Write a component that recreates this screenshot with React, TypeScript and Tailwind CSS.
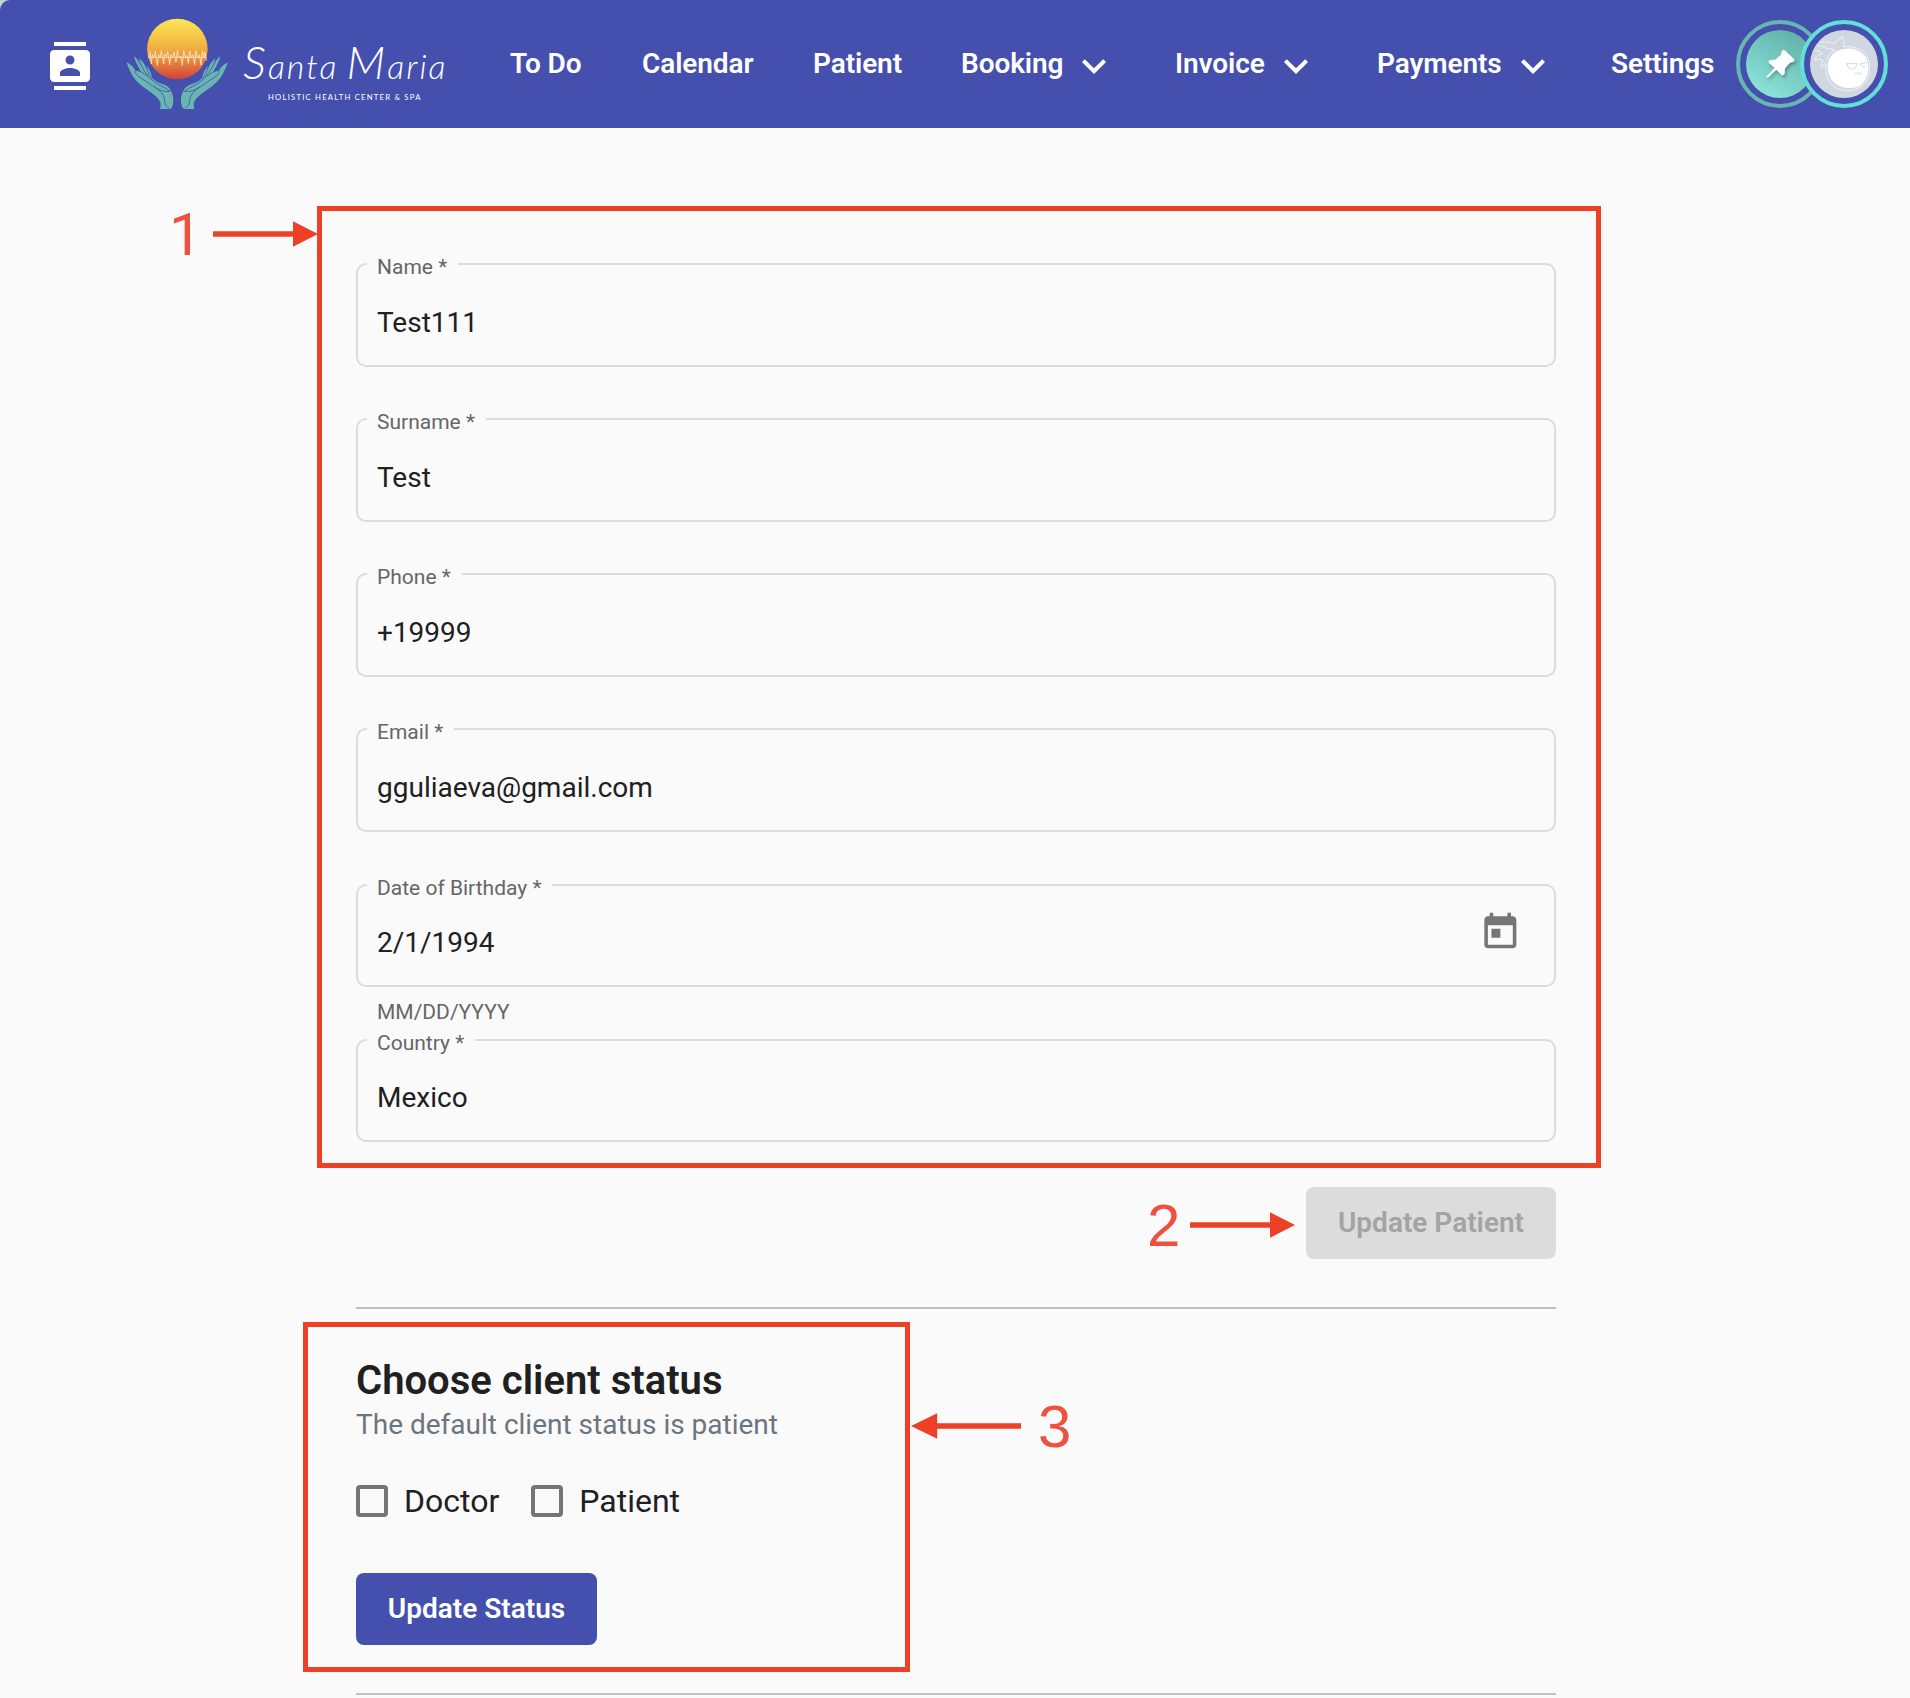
import React from "react";

type NavEntry = { label: string; width: string; menu?: boolean };

const NAV: NavEntry[] = [
  { label: "To Do", width: "w-[132px]" },
  { label: "Calendar", width: "w-[171px]" },
  { label: "Patient", width: "w-[148px]" },
  { label: "Booking", width: "w-[214px]", menu: true },
  { label: "Invoice", width: "w-[202px]", menu: true },
  { label: "Payments", width: "w-[234px]", menu: true },
  { label: "Settings", width: "w-[124px]" },
];

function ContactsIcon() {
  return (
    <svg viewBox="0 0 24 24" className="mt-1 size-12 shrink-0 fill-white">
      <path d="M20 0H4v2h16V0zM4 24h16v-2H4v2zM20 4H4c-1.1 0-2 .9-2 2v12c0 1.1.9 2 2 2h16c1.1 0 2-.9 2-2V6c0-1.1-.9-2-2-2zm-8 2.75c1.24 0 2.25 1.01 2.25 2.25s-1.01 2.25-2.25 2.25S9.75 10.24 9.75 9 10.76 6.75 12 6.75zM17 17H7v-1.5c0-1.67 3.33-2.5 5-2.5s5 .83 5 2.5V17z" />
    </svg>
  );
}

function Chevron() {
  return (
    <svg viewBox="0 0 24 24" className="ml-[7px] mt-1 size-12 shrink-0 fill-white">
      <path d="M7.41 8.59 12 13.17l4.59-4.58L18 10l-6 6-6-6 1.41-1.41z" />
    </svg>
  );
}

function HandHalf() {
  return (
    <g>
      <path
        fill="#68b5b1"
        d="M20 157 C30 162 40 170 46 181 C52 181 58 183 64 187 C56 172 44 152 42 138 C54 148 62 164 69 181 C62 166 56 152 56 145 C68 152 76 166 80 181 C78 174 78 170 79 168 C88 176 94 190 97 205 C104 213 116 219 127 222 C140 226 150 233 153 244 C160 254 162 272 158 286 C157 292 154 296 150 297 H120 C122 290 122 283 121 277 C112 258 92 247 74 234 C54 220 38 202 32 186 C26 176 22 166 20 157Z"
      />
      <path
        fill="none"
        stroke="#444fae"
        strokeWidth="2.4"
        d="M46 181 C44 190 52 196 60 202 L100 229 C118 240 134 252 134 274 C135 286 141 292 148 294 M46 181 C60 180 84 199 97 211 C112 226 134 230 150 244 C134 247 116 240 103 230 M56 147 C62 166 72 184 84 197 M79 170 C82 184 88 196 96 206"
      />
    </g>
  );
}

function LogoMark() {
  return (
    <svg viewBox="0 0 360 315" className="mb-[3px] h-[105px] w-[120px] shrink-0">
      <defs>
        <linearGradient id="sun" x1="0" y1="0" x2="0" y2="1">
          <stop offset="0" stopColor="#fbe65a" />
          <stop offset="0.3" stopColor="#f4c844" />
          <stop offset="0.62" stopColor="#ea9b41" />
          <stop offset="1" stopColor="#d4403a" />
        </linearGradient>
      </defs>
      <circle cx="172" cy="117" r="91" fill="url(#sun)" />
      <path
        fill="none"
        stroke="#fde3c4"
        strokeWidth="2.6"
        strokeLinejoin="round"
        d="M84 142 H260 M86 142 L90 123 L94 162 L97 134 L102 142 L106 124 L112 166 L116 134 L121 142 L124 122 L131 162 L135 132 L139 140 L143 124 L149 164 L153 133 L158 142 L162 126 L168 156 L172 122 L176 144 L182 138 L187 166 L191 122 L196 144 L201 136 L205 160 L209 123 L214 142 L219 134 L224 164 L228 122 L233 144 L238 134 L243 165 L247 123 L251 142 L255 126 L259 152"
      />
      <HandHalf />
      <g transform="translate(343 0) scale(-1 1)">
        <HandHalf />
      </g>
    </svg>
  );
}

function Wordmark() {
  return (
    <div className="flex w-[220px] shrink-0 flex-col pl-[3px] pt-[9px] text-white">
      <span className="flex h-14 items-baseline whitespace-nowrap font-['Lato'] text-[34px] font-light italic leading-[52px] tracking-[2px]">
        <span className="text-[46px]">S</span>anta
        <span className="ml-2 text-[46px]">M</span>aria
      </span>
      <span className="whitespace-nowrap pl-[25px] font-['Lato'] text-[7.7px] font-normal leading-[10px] tracking-[1.22px]">
        HOLISTIC HEALTH CENTER &amp; SPA
      </span>
    </div>
  );
}

function PinAvatar() {
  return (
    <svg viewBox="33 29 264 264" className="size-[88px] shrink-0">
      <defs>
        <linearGradient id="teal" x1="0.25" y1="1" x2="0.8" y2="0">
          <stop offset="0" stopColor="#8ce5dc" />
          <stop offset="1" stopColor="#60aea6" />
        </linearGradient>
        <filter id="pinShadow" x="-30%" y="-30%" width="170%" height="170%">
          <feDropShadow dx="4" dy="6" stdDeviation="4" floodColor="#1c4a48" floodOpacity="0.5" />
        </filter>
      </defs>
      <circle cx="165" cy="161" r="126" fill="#444fae" stroke="#68b5b2" strokeWidth="12" />
      <circle cx="165" cy="161" r="102" fill="url(#teal)" />
      <path
        filter="url(#pinShadow)"
        fill="#fff"
        d="M170 123 Q175 116 181 121 L207 146 Q211 152 204 155 L195 157 L180 174 L179 189 Q177 197 170 194 L154 178 L128 202 L124 199 L149 173 L132 158 Q128 151 136 149 L151 148 L168 133Z"
      />
    </svg>
  );
}

function FaceAvatar() {
  return (
    <svg viewBox="33 29 264 264" className="-ml-6 size-[88px] shrink-0">
      <circle cx="165" cy="161" r="126" fill="#444fae" stroke="#64dfd8" strokeWidth="12" />
      <circle cx="165" cy="161" r="102" fill="#d1d7e1" />
      {/* Artwork is drawn 192 units right of the pin disc's frame */}
      <g transform="translate(-192 0)">
        <g fill="none" stroke="#f5f7fa" strokeWidth="2.6" strokeLinejoin="round">
          <path d="M284 97 C298 92 314 95 327 100 C334 94 345 86 352 79 C356 90 358 100 356 109 C378 108 398 112 412 121 C428 134 436 152 433 172 C436 202 418 228 394 236 C374 244 342 242 324 226 C306 210 298 184 304 160 C298 161 292 166 291 171 C289 162 290 157 294 151 C284 145 276 146 269 150 C272 138 282 131 293 130 C288 124 279 121 272 122" />
          <path d="M276 106 C290 104 300 110 306 117 C312 114 320 114 328 119 C316 126 308 138 304 152" />
        </g>
        <path
          fill="#fff"
          d="M362 115 C396 113 424 130 428 155 C436 190 418 222 398 230 C376 236 346 234 329 218 C302 194 302 150 325 130 C334 120 348 116 362 115Z"
        />
        <path
          fill="none"
          stroke="#cfd6e0"
          strokeWidth="2.8"
          strokeLinejoin="round"
          d="M364 160 L397 160 M367 161 C368 172 374 177 382 177 C391 176 395 169 395 161 M404 161 L427 156 M406 161 C408 168 414 171 421 169 M387 193 C393 187 403 186 409 190 L403 194"
        />
      </g>
    </svg>
  );
}

function Header() {
  return (
    <div className="bg-[#c9d2d3]">
      <header className="flex h-32 items-center rounded-tl-[10px] bg-[#444fae] pl-[46px] font-['Roboto'] text-white">
        <ContactsIcon />
        <div className="ml-[26px] flex items-center">
          <LogoMark />
          <Wordmark />
        </div>
        <nav className="ml-[50px] flex items-center text-[28px] font-semibold tracking-[-0.1px]">
          {NAV.map((item) => (
            <a key={item.label} className={`${item.width} flex h-12 shrink-0 items-center whitespace-nowrap`}>
              {item.label}
              {item.menu && <Chevron />}
            </a>
          ))}
        </nav>
        <div className="ml-px flex items-center">
          <PinAvatar />
          <FaceAvatar />
        </div>
      </header>
    </div>
  );
}

type FieldProps = { label: string; value: string; hint?: string; calendar?: boolean };

function Field({ label, value, hint, calendar }: FieldProps) {
  return (
    <div className="h-[155.14px]">
      <div className="relative flex h-[103.5px] items-center justify-between rounded-[10px] border-2 border-[#dcdcdc] pl-[19px] pr-8">
        <label className="absolute -top-[11px] left-[9px] bg-[#fafafa] pl-2.5 pr-[11px] text-[21px] leading-[26px] text-[#666]">
          {label}
        </label>
        <span className="pt-4 text-[28px] leading-8 text-[#202020]">{value}</span>
        {calendar && (
          <svg viewBox="0 0 24 24" className="mb-[6px] size-[42.7px] fill-[#757575]">
            <path d="M19 3h-1V1h-2v2H8V1H6v2H5c-1.11 0-1.99.9-1.99 2L3 19c0 1.1.89 2 2 2h14c1.1 0 2-.9 2-2V5c0-1.1-.9-2-2-2zm0 16H5V8h14v11zM7 10h5v5H7z" />
          </svg>
        )}
      </div>
      {hint && <p className="pl-[21px] pt-3 text-[21px] leading-[26px] text-[#666]">{hint}</p>}
    </div>
  );
}

function Arrow({ flip = false }: { flip?: boolean }) {
  return (
    <svg viewBox="0 0 105 26" className={flip ? "h-[26px] w-[110px] -scale-x-100" : "h-[26px] w-[105px]"} preserveAspectRatio="none">
      <path fill="#ec4127" d="M0 10.3H80V0.2L105 13L80 25.8V15.7H0Z" />
    </svg>
  );
}

function Checkbox({ label }: { label: string }) {
  return (
    <label className="flex items-center gap-4 text-[32px] leading-9 text-[#202020]">
      <span className="size-8 rounded-[4px] border-4 border-[#757575]" />
      {label}
    </label>
  );
}

export default function App() {
  return (
    <div className="relative h-[1698px] w-[1910px] overflow-hidden bg-[#fafafa] font-['Roboto']">
      <Header />
      <main className="flex flex-col items-start pt-[78px]">
        <section className="ml-[317px] h-[962px] w-[1284px] border-[5px] border-[#ec4127] pl-[34px] pr-10 pt-[52px]">
          <Field label="Name *" value="Test111" />
          <Field label="Surname *" value="Test" />
          <Field label="Phone *" value="+19999" />
          <Field label="Email *" value="gguliaeva@gmail.com" />
          <Field label="Date of Birthday *" value="2/1/1994" hint="MM/DD/YYYY" calendar />
          <Field label="Country *" value="Mexico" />
        </section>

        <button className="ml-[1306px] mt-[19px] h-[72px] w-[250px] rounded-lg bg-[#dcdcdc] text-[28px] font-semibold text-[#a3a3a3]">
          Update Patient
        </button>
        <div className="ml-[356px] mt-12 h-0.5 w-[1200px] bg-[#c1c1c1]" />

        <section className="ml-[303px] mt-[13px] flex h-[350px] w-[607px] flex-col items-start border-[5px] border-[#ec4127] pl-12 pt-[30px]">
          <h2 className="text-[40px] font-semibold leading-12 text-[#202020]">Choose client status</h2>
          <p className="pt-0.5 text-[28px] leading-9 text-[#6c757d]">The default client status is patient</p>
          <div className="mt-10 flex gap-8">
            <Checkbox label="Doctor" />
            <Checkbox label="Patient" />
          </div>
          <button className="mt-[54px] h-[72px] w-[241px] rounded-lg bg-[#444fae] text-[28px] font-semibold text-white">
            Update Status
          </button>
        </section>
        <div className="ml-[356px] mt-[21px] h-0.5 w-[1200px] bg-[#c1c1c1]" />
      </main>

      <div className="absolute left-[169px] top-[203px] flex items-center text-[#ee5140]">
        <span className="w-11 pt-0.5 font-['Roboto'] text-[59px] leading-[60px]">1</span>
        <Arrow />
      </div>
      <div className="absolute left-[1147px] top-[1194px] flex items-center text-[#ee5140]">
        <span className="w-[43px] pt-0.5 font-['Liberation_Sans'] text-[60px] leading-[60px]">2</span>
        <Arrow />
      </div>
      <div className="absolute left-[911px] top-[1395px] flex items-center text-[#ee5140]">
        <Arrow flip />
        <span className="ml-[17px] pt-0.5 font-['Liberation_Sans'] text-[60px] leading-[60px]">3</span>
      </div>
    </div>
  );
}
